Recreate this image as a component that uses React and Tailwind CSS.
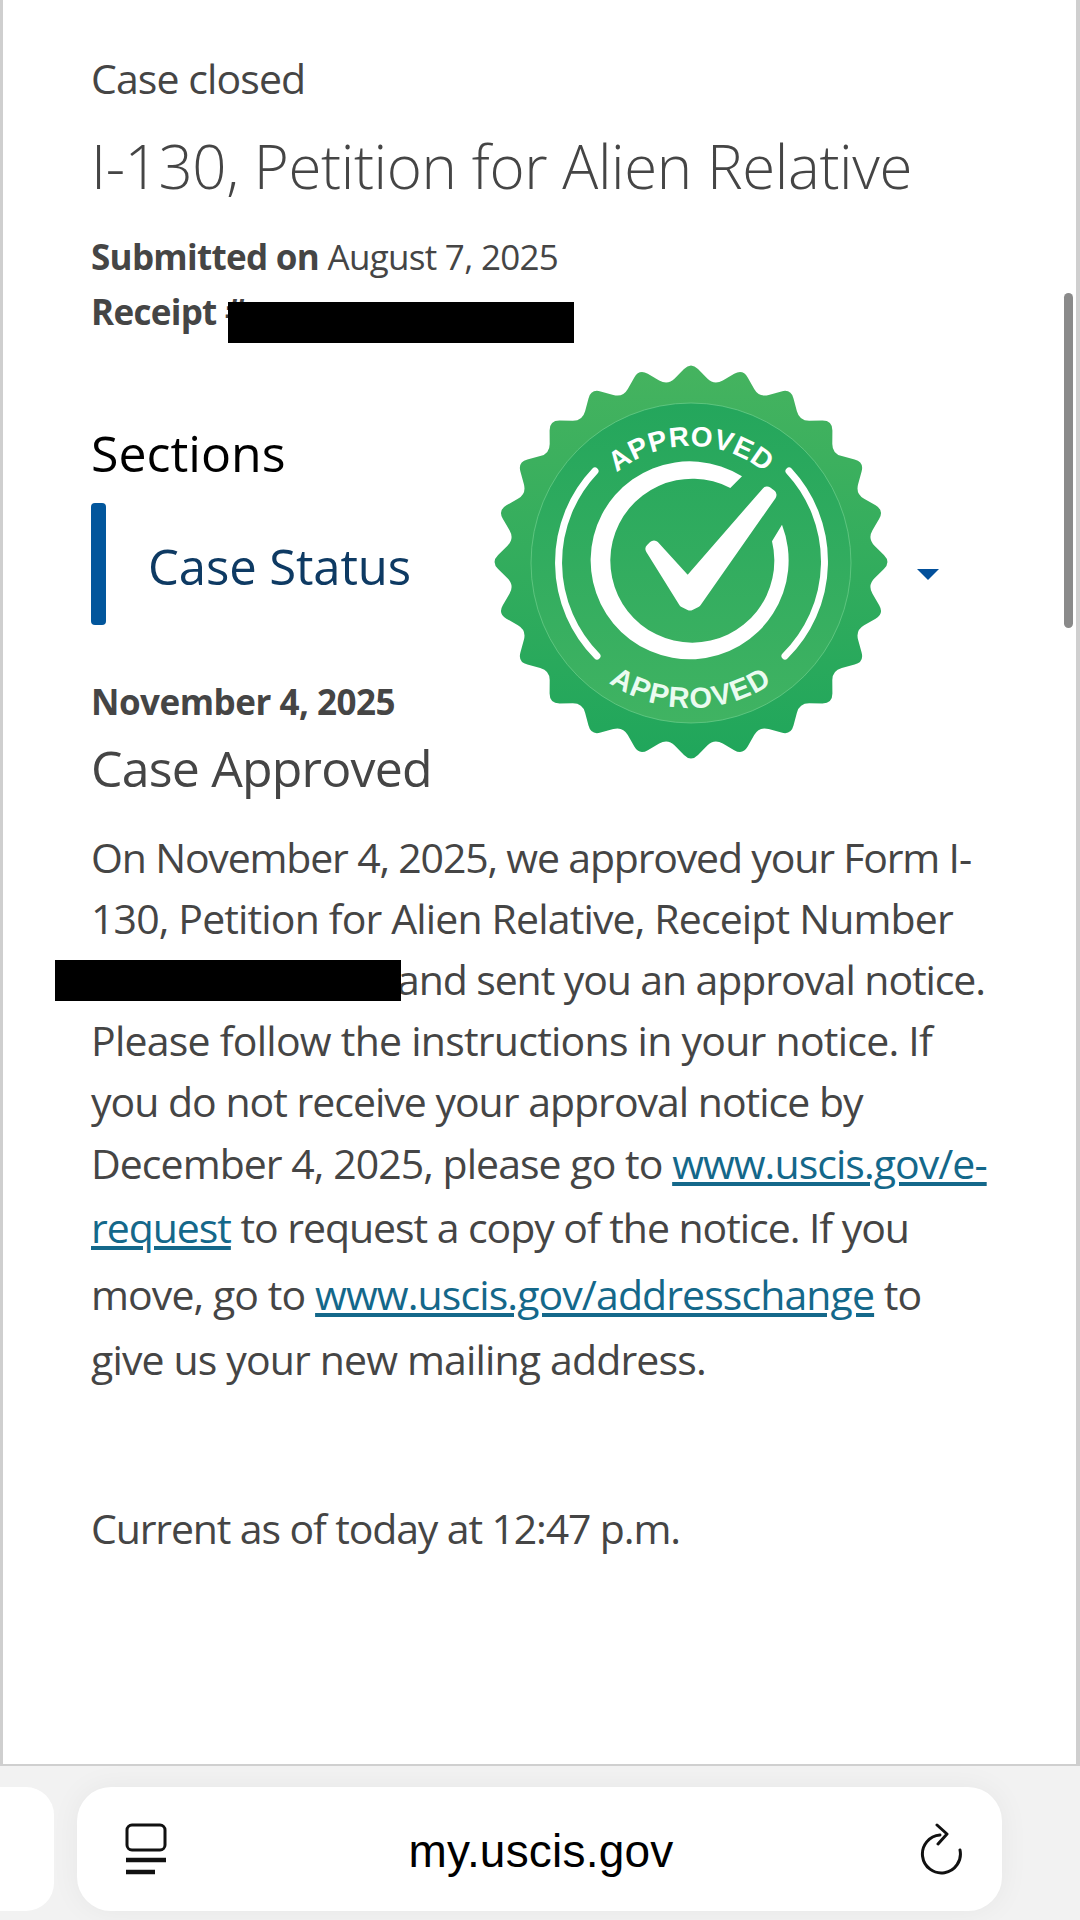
import React from 'react'

const font = { fontFamily: '"Open Sans", "Noto Sans", sans-serif' }

// 24 teeth, sharp-ish sides with small rounding at tips and notches
function sealPath(cx, cy, outer, inner, count) {
  const step = Math.PI / count
  const pts = []
  for (let i = 0; i < count * 2; i++) {
    const r = i % 2 === 0 ? outer : inner
    const a = -Math.PI / 2 + i * step
    pts.push([cx + r * Math.cos(a), cy + r * Math.sin(a)])
  }
  const mix = (p, q, t) => [p[0] + (q[0] - p[0]) * t, p[1] + (q[1] - p[1]) * t]
  const f = (p) => `${p[0].toFixed(1)} ${p[1].toFixed(1)}`
  let d = ''
  pts.forEach((p, i) => {
    const prev = pts[(i + pts.length - 1) % pts.length]
    const next = pts[(i + 1) % pts.length]
    const a = mix(p, prev, 0.3)
    const b = mix(p, next, 0.3)
    d += `${i === 0 ? 'M' : 'L'}${f(a)}Q${f(p)} ${f(b)}`
  })
  return d + 'Z'
}

function Badge() {
  return (
    <svg className="absolute left-[491px] top-[362px]" width="400" height="400" viewBox="0 0 400 400">
      <defs>
        <linearGradient id="seal" x1="0" y1="0" x2="0" y2="1">
          <stop offset="0" stopColor="#45b35f" />
          <stop offset="1" stopColor="#20a65b" />
        </linearGradient>
        <linearGradient id="disc" x1="0" y1="0" x2="0" y2="1">
          <stop offset="0" stopColor="#24a65c" />
          <stop offset="1" stopColor="#40b362" />
        </linearGradient>
        <path id="arcTop" d="M84 200a116 116 0 0 1 232 0" />
        <path id="arcBottom" d="M54 200a146 146 0 0 0 292 0" />
      </defs>
      <path d={sealPath(200, 200, 200, 178, 24)} fill="url(#seal)" />
      <circle cx="200" cy="201" r="160" fill="url(#disc)" stroke="#6fcf8c" strokeWidth="0.7" />
      <text fill="#fff" fontFamily="Liberation Sans, sans-serif" fontWeight="700" fontSize="28" letterSpacing="0.5">
        <textPath href="#arcTop" startOffset="50%" textAnchor="middle">APPROVED</textPath>
      </text>
      <text fill="#eafbf0" fontFamily="Liberation Sans, sans-serif" fontWeight="700" fontSize="29" letterSpacing="1.5">
        <textPath href="#arcBottom" startOffset="50%" textAnchor="middle">APPROVED</textPath>
      </text>
      <path d="M104 109A133 133 0 0 0 106 294" fill="none" stroke="#fff" strokeWidth="7" strokeLinecap="round" />
      <path d="M298 109A133 133 0 0 1 294 294" fill="none" stroke="#fff" strokeWidth="7" strokeLinecap="round" />
      <path d="M251 114.3A99 99 0 1 0 291 162.7L281 179.3A82 82 0 1 1 239.3 126Z" fill="#fff" />
      <path
        d="M160 187L163 184L196.7 221L276 130L280 133L205 240L199 243L193 240Z"
        fill="#fff"
        stroke="#fff"
        strokeWidth="11"
        strokeLinejoin="round"
      />
    </svg>
  )
}

export default function App() {
  return (
    <div className="relative w-[1080px] h-[1920px] overflow-hidden bg-[#f2f2f2]" style={font}>
      {/* page */}
      <div className="relative h-[1766px] bg-white border-l-[3px] border-r-[4px] border-b-2 border-[#cfcfcf] pl-[88px] pt-[52px] text-[#454545]">
        <p className="text-[41px] leading-[52px] tracking-[-0.9px]">Case closed</p>
        <h1 className="mt-[24px] text-[60px] leading-[76px] font-light tracking-[-0.4px] whitespace-nowrap">I-130, Petition for Alien Relative</h1>
        <p className="mt-[25px] text-[35px] leading-[55px] tracking-[-0.7px]"><b className="font-bold">Submitted on</b> August 7, 2025</p>
        <p className="text-[35px] leading-[55px] tracking-[-0.7px] font-bold">Receipt #</p>

        <h2 className="mt-[81px] text-[50px] leading-[66px] text-black">Sections</h2>
        <div className="mt-[17px] flex items-center h-[122px]">
          <div className="w-[15px] h-full rounded bg-[#02569c]" />
          <span className="ml-[42px] mt-[5px] text-[49px] leading-none text-[#0e3a63] tracking-[-0.1px]">Case Status</span>
          <div className="ml-[506px] mt-[20px] w-0 h-0 border-l-[11px] border-r-[11px] border-t-[11px] border-l-transparent border-r-transparent border-t-[#02509b]" />
        </div>

        <p className="mt-[54px] text-[35px] leading-[46px] font-bold tracking-[-0.5px]">November 4, 2025</p>
        <p className="mt-[12px] text-[50px] leading-[62px] tracking-[-0.8px]">Case Approved</p>

        <div className="mt-[28px] text-[41px] whitespace-nowrap">
          <p className="leading-[61px] tracking-[-1.17px]">On November 4, 2025, we approved your Form I-</p>
          <p className="leading-[61px] tracking-[-0.85px]">130, Petition for Alien Relative, Receipt Number</p>
          <p className="leading-[61px] pl-[306px] tracking-[-1.1px]">and sent you an approval notice.</p>
          <p className="leading-[61px] tracking-[-0.75px]">Please follow the instructions in your notice. If</p>
          <p className="leading-[61px] tracking-[-1px]">you do not receive your approval notice by</p>
          <p className="leading-[62px] tracking-[-0.95px]">December 4, 2025, please go to <a className="text-[#14688a] underline">www.uscis.gov/e-</a></p>
          <p className="leading-[67px] tracking-[-1.05px]"><a className="text-[#14688a] underline">request</a> to request a copy of the notice. If you</p>
          <p className="leading-[66px] tracking-[-0.9px]">move, go to <a className="text-[#14688a] underline">www.uscis.gov/addresschange</a> to</p>
          <p className="leading-[65px] tracking-[-0.85px]">give us your new mailing address.</p>
        </div>
        <p className="mt-[110px] text-[41px] leading-[52px] tracking-[-1.13px]">Current as of today at 12:47 p.m.</p>
      </div>

      {/* redaction bars + seal sit over the text */}
      <div className="absolute left-[228px] top-[302px] w-[346px] h-[41px] bg-black" />
      <div className="absolute left-[55px] top-[960px] w-[346px] h-[41px] bg-black" />
      <div className="absolute right-[7px] top-[293px] w-[9px] h-[335px] rounded-full bg-[#8a8a8a]" />
      <Badge />

      {/* safari bar */}
      <div className="flex gap-[23px] pt-[21px] -ml-[498px]">
        <div className="w-[552px] h-[124px] shrink-0 rounded-[28px] bg-white" />
        <div className="w-[925px] h-[124px] shrink-0 rounded-[34px] bg-white shadow-[0_0_30px_rgba(0,0,0,0.05)] flex items-center justify-between pl-[47px] pr-[38px]">
          <svg width="44" height="52" viewBox="0 0 44 52" fill="none" stroke="#111" strokeWidth="3">
            <rect x="3" y="2" width="38" height="25" rx="5" />
            <path d="M2 37h40M2 49h29" strokeWidth="4.5" />
          </svg>
          <span className="mt-[4px] mr-[6px] text-[46px] text-black tracking-[0.2px]" style={{ fontFamily: '"Liberation Sans", sans-serif' }}>my.uscis.gov</span>
          <svg width="44" height="52" viewBox="0 0 44 52" fill="none" stroke="#111" strokeWidth="3" strokeLinecap="round" strokeLinejoin="round">
            <path d="M20 12A19 19 0 1 0 40 27" />
            <path d="M17 2l10 9-9 10" />
          </svg>
        </div>
      </div>
    </div>
  )
}
